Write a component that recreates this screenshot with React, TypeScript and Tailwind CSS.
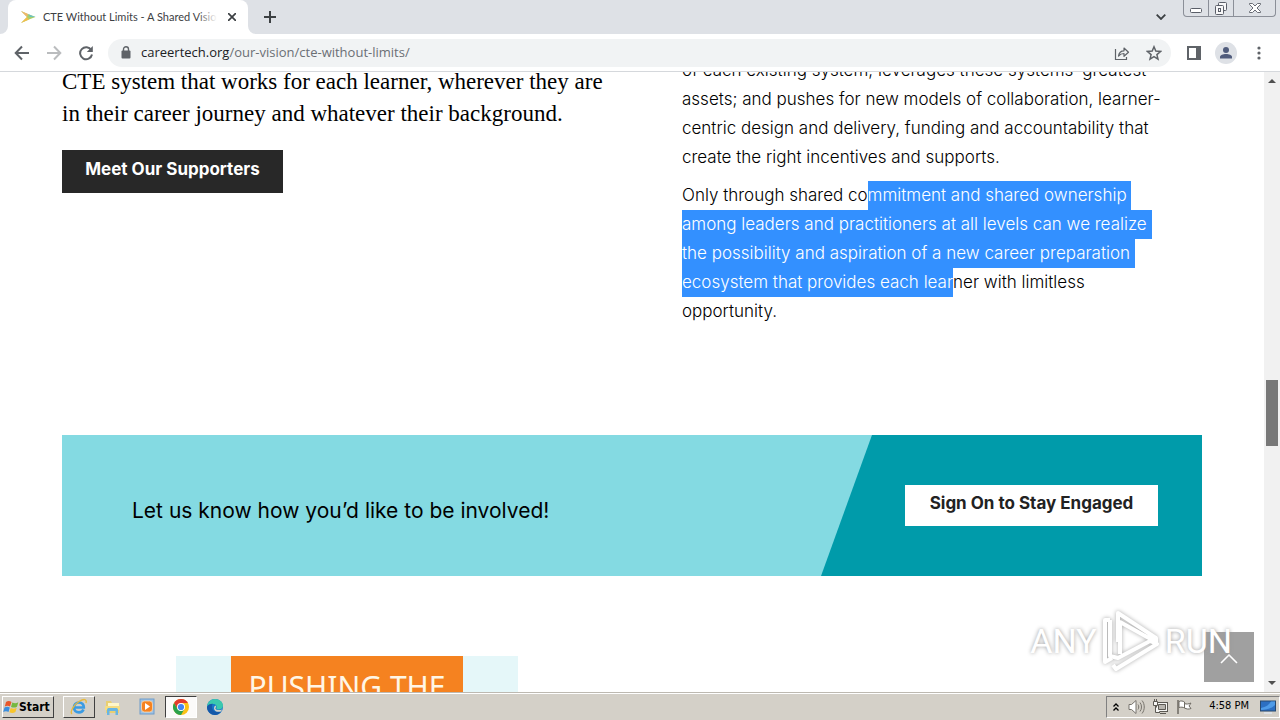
import React from "react";

type IconProps = { className?: string };

const Favicon = () => (
  <svg viewBox="0 0 16 16" className="h-4 w-4 shrink-0">
    <path d="M1 2l8 3.600L15.500 8 9 10.500 1 14l6-6z" fill="#a9cf6a" />
    <path d="M1 2l7 3-1 3z" fill="#f2b66a" />
    <path d="M1 14l6-6 2 2.500z" fill="#f3bd4a" />
    <path d="M8 5l7.500 3H10z" fill="#6fc3bb" />
    <path d="M1.500 4L6 8l-4.500 4z" fill="#fff" />
  </svg>
);

const Back = ({ className }: IconProps) => (
  <svg viewBox="0 0 16 16" className={className} fill="none" stroke="currentColor" strokeWidth="2">
    <path d="M15 8H2M8 1.500L1.700 8 8 14.500" />
  </svg>
);

const Reload = () => (
  <svg viewBox="0 0 16 16" className="h-4 w-4" fill="none" stroke="#5f6368" strokeWidth="2">
    <path d="M13.300 5.200A6 6 0 1 0 14 9.500" />
    <path d="M14.800 1v6h-6z" fill="#5f6368" stroke="none" />
  </svg>
);

const Lock = () => (
  <svg viewBox="0 0 10 13" className="h-[13px] w-[10px] shrink-0">
    <rect x="0.500" y="4.500" width="9" height="8" rx="1" fill="#5f6368" />
    <path d="M2.500 5V3.200a2.500 2.500 0 0 1 5 0V5" fill="none" stroke="#5f6368" strokeWidth="1.400" />
  </svg>
);

const Share = () => (
  <svg viewBox="0 0 16 16" className="h-4 w-4" fill="none" stroke="#5f6368" strokeWidth="1.200">
    <path d="M1.500 4v10.500h11V12" />
    <path d="M4.500 11c.5-3.500 2.500-5.200 5.500-5.200V3l4.500 4.200L10 11.300V8.500c-2.300 0-4 .7-5.500 2.500z" strokeLinejoin="round" />
  </svg>
);

const Star = () => (
  <svg viewBox="0 0 16 16" className="h-4 w-4" fill="none" stroke="#5f6368" strokeWidth="1.500">
    <path d="M8 1.800l1.800 4.300 4.700.4-3.600 3.100 1.100 4.500L8 11.700l-4 2.400 1.100-4.500L1.500 6.500l4.700-.4z" />
  </svg>
);

const SidePanel = () => (
  <svg viewBox="0 0 14 14" className="h-[14px] w-[14px]">
    <rect x="1" y="1" width="12" height="12" fill="none" stroke="#5f6368" strokeWidth="2" />
    <rect x="9" y="0" width="5" height="14" fill="#5f6368" />
  </svg>
);

const Avatar = () => (
  <svg viewBox="0 0 22 22" className="h-[22px] w-[22px]">
    <circle cx="11" cy="11" r="11" fill="#dee1e6" />
    <circle cx="11" cy="8" r="3" fill="#505c7c" />
    <path d="M5 16.500v-1.500c0-2 3-3 6-3s6 1 6 3v1.500z" fill="#505c7c" />
  </svg>
);

const Kebab = () => (
  <svg viewBox="0 0 4 14" className="h-[14px] w-1" fill="#5f6368">
    <circle cx="2" cy="2" r="1.600" />
    <circle cx="2" cy="7" r="1.600" />
    <circle cx="2" cy="12" r="1.600" />
  </svg>
);

function TabStrip() {
  return (
    <header className="flex h-[34px] shrink-0 items-end bg-[#dee1e6] pl-2">
      <div className="relative flex h-[34px] w-60 items-center rounded-t-lg bg-white pl-3">
        <svg viewBox="0 0 8 8" className="absolute -left-2 bottom-0 h-2 w-2"><path d="M8 0v8H0a8 8 0 0 0 8-8z" fill="#fff" /></svg>
        <svg viewBox="0 0 8 8" className="absolute -right-2 bottom-0 h-2 w-2"><path d="M0 0v8h8a8 8 0 0 1-8-8z" fill="#fff" /></svg>
        <Favicon />
        <span className="relative ml-[7px] w-[174px] overflow-hidden whitespace-nowrap font-['Lato',sans-serif] text-[11px] text-[#3c4043]">
          CTE Without Limits - A Shared Vision
          <span className="absolute inset-y-0 right-0 w-5 bg-linear-to-r from-transparent to-white" />
        </span>
        <button aria-label="Close tab" className="ml-[7px] flex h-4 w-4 items-center justify-center">
          <svg viewBox="0 0 8 8" className="h-2 w-2" stroke="#3c4043" strokeWidth="1.700"><path d="M0 0l8 8M8 0L0 8" /></svg>
        </button>
      </div>
      <button aria-label="New tab" className="ml-3 flex h-[34px] w-5 items-center justify-center">
        <svg viewBox="0 0 12 12" className="h-3 w-3" stroke="#3c4043" strokeWidth="2"><path d="M6 0v12M0 6h12" /></svg>
      </button>
      <div className="ml-auto flex h-[34px] items-start pr-1">
        <button aria-label="Search tabs" className="mr-[14px] flex h-[34px] w-4 items-center justify-center">
          <svg viewBox="0 0 10 6" className="h-[6px] w-[10px]" fill="none" stroke="#3c4043" strokeWidth="1.800"><path d="M.7.700L5 5 9.300.700" /></svg>
        </button>
        <div className="flex h-[17px] divide-x divide-[#8b8f98] rounded-b border border-t-0 border-[#8b8f98]">
          <button aria-label="Minimize" className="flex w-[25px] items-center justify-center">
            <svg viewBox="0 0 12 6" className="mt-1 h-[6px] w-3"><rect x=".5" y="1.500" width="11" height="4" rx="1" fill="#fff" stroke="#5a5e68" /></svg>
          </button>
          <button aria-label="Restore" className="flex w-[25px] items-center justify-center">
            <svg viewBox="0 0 14 13" className="h-[13px] w-[14px]" fill="#f7f7f8" stroke="#5a5e68">
              <rect x="4.500" y=".5" width="8" height="8" rx="1" />
              <rect x="1.500" y="3.500" width="8" height="9" rx="1" />
              <rect x="4.500" y="6.500" width="2" height="3" />
            </svg>
          </button>
          <button aria-label="Close" className="flex w-[41px] items-center justify-center">
            <svg viewBox="0 0 12 10" className="h-[10px] w-3"><path d="M.5.500h3L6 3 8.500.500h3v1L8 5l3.500 3.500v1h-3L6 7 3.500 9.500h-3v-1L4 5 .5 1.500z" fill="#fff" stroke="#5a5e68" strokeWidth=".9" /></svg>
          </button>
        </div>
      </div>
    </header>
  );
}

function Toolbar() {
  return (
    <nav className="flex h-[38px] shrink-0 items-center border-b border-[#d5d8dc] bg-white px-[14px]">
      <button aria-label="Back" className="mr-4"><Back className="h-4 w-4 text-[#5f6368]" /></button>
      <button aria-label="Forward" className="mr-4"><Back className="h-4 w-4 rotate-180 text-[#babcbe]" /></button>
      <button aria-label="Reload" className="mr-[14px]"><Reload /></button>
      <div className="flex h-7 min-w-0 flex-1 items-center rounded-full bg-[#f1f3f4] pr-[9px] pl-[13px]">
        <Lock />
        <a href="#address" className="ml-[10px] flex-1 font-['Open_Sans',sans-serif] text-[13px] whitespace-nowrap text-[#6b6f74]">
          <span className="text-[#202124]">careertech.org</span>/our-vision/cte-without-limits/
        </a>
        <button aria-label="Share" className="mr-4"><Share /></button>
        <button aria-label="Bookmark"><Star /></button>
      </div>
      <button aria-label="Side panel" className="ml-4"><SidePanel /></button>
      <button aria-label="Profile" className="ml-[14px]"><Avatar /></button>
      <button aria-label="Menu" className="mr-[5px] ml-5"><Kebab /></button>
    </nav>
  );
}

const Selected = ({ children }: { children: React.ReactNode }) => (
  <span className="inline-block bg-[#3390ff] whitespace-pre text-white">{children}</span>
);

function Article() {
  return (
    <section className="-mt-4 grid grid-cols-[31fr_26fr] text-black">
      <div className="pt-[10px]">
        <p className="font-['Liberation_Serif',serif] text-[23px] leading-8 whitespace-nowrap">
          CTE system that works for each learner, wherever they are<br />
          in their career journey and whatever their background.
        </p>
        <a href="#supporters" className="mt-5 inline-flex h-[43px] w-[221px] items-center justify-center bg-[#282828] pb-1 font-['Inter',sans-serif] text-[17px] font-bold text-white">
          Meet Our Supporters
        </a>
      </div>
      <div className="font-['Inter',sans-serif] text-[17px] leading-[29px] font-light whitespace-nowrap">
        <p>
          of each existing system; leverages these systems’ greatest<br />
          assets; and pushes for new models of collaboration, learner-<br />
          centric design and delivery, funding and accountability that<br />
          create the right incentives and supports.
        </p>
        <p className="mt-[9px]">
          Only through shared co<Selected>mmitment and shared ownership </Selected><br />
          <Selected>among leaders and practitioners at all levels can we realize </Selected><br />
          <Selected>the possibility and aspiration of a new career preparation </Selected><br />
          <Selected>ecosystem that provides each lear</Selected>ner with limitless<br />
          opportunity.
        </p>
      </div>
    </section>
  );
}

function Banner() {
  return (
    <section className="mt-[109px] flex h-[141px] bg-[#84dae2]">
      <p className="flex flex-1 items-center pt-[10px] pl-[70px] font-['Inter',sans-serif] text-[21px] text-black">
        Let us know how you’d like to be involved!
      </p>
      <div className="flex w-[381px] items-center justify-end bg-[#009baa] pr-11 [clip-path:polygon(51px_0,100%_0,100%_100%,0_100%)]">
        <a href="#sign-on" className="flex h-[41px] w-[253px] items-center justify-center bg-white pb-1 font-['Inter',sans-serif] text-[17px] font-bold text-[#222]">
          Sign On to Stay Engaged
        </a>
      </div>
    </section>
  );
}

function Watermark() {
  return (
    <div className="pointer-events-none absolute right-12 bottom-4 flex h-[70px] items-center gap-1 font-['Roboto',sans-serif] text-[34px] text-white [text-shadow:0_0_4px_#999999]">
      <span>ANY</span>
      <svg viewBox="0 0 60 66" className="h-[66px] w-[60px] drop-shadow-[0_0_2px_#aaaaaa]" fill="none" stroke="#fff" strokeWidth="4" strokeLinejoin="round">
        <path d="M17 34V5l38 25v4L19 14v32" />
        <path d="M9 12H4v42l7-4" />
        <path d="M9 12v36l8 2 32-17 7 3-41 25-3-4" />
      </svg>
      <span>RUN</span>
    </div>
  );
}

function Scrollbar() {
  return (
    <aside aria-label="Scrollbar" className="flex w-4 shrink-0 flex-col items-center bg-[#f1f1f1] py-[7px]">
      <svg viewBox="0 0 8 4" className="h-1 w-2"><path d="M0 4l4-4 4 4z" fill="#505050" /></svg>
      <div className="flex-[297]" />
      <div className="h-[66px] w-3 bg-[#787878]" />
      <div className="flex-[235]" />
      <svg viewBox="0 0 8 4" className="h-1 w-2"><path d="M0 0l4 4 4-4z" fill="#505050" /></svg>
    </aside>
  );
}

const WindowsFlag = () => (
  <svg viewBox="0 0 16 16" className="h-4 w-4">
    <path d="M3 3c2-1.500 4-1 5.500 0L7 7.500C5.500 6.500 3.500 6.500 1.800 7.500z" fill="#e8572a" />
    <path d="M9.300 3.400c2 1 4 1 6-.2L14 7.700c-2 1.200-4 1-6 .2z" fill="#76b83f" />
    <path d="M1.500 8.400c2-1 4-.8 5.300.2L5.500 13C4 12 2 12 .2 13z" fill="#3b8ede" />
    <path d="M7.700 8.900c2 1 4 1 6-.2L12.400 13c-2 1.400-4 1.200-6 .3z" fill="#f8c52c" />
  </svg>
);

const Explorer = () => (
  <svg viewBox="0 0 18 18" className="h-[18px] w-[18px]">
    <path d="M4.300 9.500h9.500c.1-3-1.800-5-4.800-5s-5 2.200-5 5 2 4.900 5 4.900c2.200 0 3.800-1 4.500-2.800" fill="none" stroke="#3a9be3" strokeWidth="2.700" />
    <path d="M2 16C-.5 14 4 6.500 9 3.500s8-2.500 7 1.500" fill="none" stroke="#e7b93d" strokeWidth="1.400" />
  </svg>
);

const Folder = () => (
  <svg viewBox="0 0 18 18" className="h-[18px] w-[18px]">
    <path d="M2 3h5l1 2h7v10H2z" fill="#e9cf72" />
    <path d="M4 5h11v4H4z" fill="#fff6c9" />
    <path d="M1 8h15v4H1z" fill="#f5dd83" />
    <path d="M3 17v-5c0-1.500 1-2 2-2h7c1 0 2 .5 2 2v5h-2.500v-4h-6v4z" fill="#68b5e3" />
  </svg>
);

const MediaPlayer = () => (
  <svg viewBox="0 0 18 18" className="h-[18px] w-[18px]">
    <rect x="2" y="1" width="14" height="15" fill="#9fc3e4" stroke="#6f9bc9" />
    <rect x="3.500" y="3" width="11" height="11" rx="3" fill="#f58220" stroke="#fbd9b0" strokeWidth=".8" />
    <path d="M7 5v7l5-3.500z" fill="#fff" />
  </svg>
);

const Chrome = () => (
  <svg viewBox="0 0 16 16" className="h-4 w-4">
    <circle cx="8" cy="8" r="8" fill="#fbc116" />
    <path d="M1.070 4A8 8 0 0 1 14.930 4H8L4.540 10z" fill="#e33b2e" />
    <path d="M1.070 4A8 8 0 0 0 8 16L11.460 10H4.540z" fill="#2ba24c" />
    <circle cx="8" cy="8" r="4" fill="#fff" />
    <circle cx="8" cy="8" r="3.100" fill="#4285f4" />
  </svg>
);

const Edge = () => (
  <svg viewBox="0 0 16 16" className="h-4 w-4">
    <circle cx="8" cy="8" r="8" fill="#1677c9" />
    <path d="M0 7.500C.5 3 4 0 8 0c4.500 0 8 3 8 6.500 0 2.500-2 4-4.300 4-2.200 0-2.500-1-2.200-1.600C10 7 9 5 6 5 3 5 .8 6 0 7.500z" fill="#3ac8ae" />
    <path d="M0 8C1 5.500 3.500 4.600 6 4.800 4.500 6 4.500 9 6 11c1.800 2.200 5 2.500 8 1.200C12 15.500 9 16.500 6.500 15.800 2.500 15 0 12 0 8z" fill="#1558a8" />
    <path d="M8.500 6.500c1 1 .5 2-.2 2.700.6 2 3.700 2.500 6.700 1.200l-1 2c-3.500 1.200-7-.5-7-3 0-1.500.6-2.400 1.500-2.900z" fill="#d4d0c8" />
  </svg>
);

function Taskbar() {
  return (
    <footer className="flex h-7 shrink-0 items-center border-t border-[#bdb9b1] bg-[#d4d0c8] pl-[2px] shadow-[inset_0_1px_0_#ffffff]">
      <button className="flex h-[22px] w-[52px] items-center border border-t-white border-r-[#404040] border-b-[#404040] border-l-white text-xs font-bold text-black">
        <WindowsFlag />Start
      </button>
      <button aria-label="Internet Explorer" className="ml-[9px] flex h-[22px] w-8 items-center justify-center border border-t-white border-r-[#404040] border-b-[#404040] border-l-white"><Explorer /></button>
      <button aria-label="File Explorer" className="ml-[9px]"><Folder /></button>
      <button aria-label="Media Player" className="ml-4"><MediaPlayer /></button>
      <button aria-label="Chrome" className="ml-[9px] flex h-[22px] w-8 items-center justify-center border border-t-[#404040] border-r-white border-b-white border-l-[#404040] bg-[#fbfaf9]"><Chrome /></button>
      <button aria-label="Edge" className="ml-[10px]"><Edge /></button>
      <div className="ml-auto flex h-[22px] items-center border border-t-[#808080] border-r-white border-b-white border-l-[#808080] pr-[3px] pl-[6px]">
        <svg viewBox="0 0 6 8" className="h-2 w-[6px]" fill="none" stroke="#000" strokeWidth="1.300"><path d="M.5 3.500L3 1l2.500 2.500M.5 7.500L3 5l2.500 2.500" /></svg>
        <svg viewBox="0 0 17 16" className="ml-[9px] h-4 w-[17px]" fill="none" stroke="#77736c">
          <path d="M1 5.500h2.500L8 1.500v13l-4.500-4H1z" fill="#fff" />
          <path d="M10 5.500c1 1.500 1 3.500 0 5M12 3.500c2 2.500 2 6.500 0 9M14 1.500c3 3.500 3 9.500 0 13" />
        </svg>
        <svg viewBox="0 0 17 16" className="ml-[7px] h-4 w-[17px]" fill="#f5f5f3" stroke="#5c5953">
          <rect x="4.500" y="3.500" width="11" height="9" />
          <path d="M6.500 5.500h7v5h-7z" fill="#b8b5af" />
          <path d="M8 14.500h6M3.500 7v6.500H8M1.500 2.500h4v4h-4zM2.500 0v2.500M4.500 0v2.500" />
        </svg>
        <svg viewBox="0 0 17 16" className="ml-[7px] h-4 w-[17px]" fill="#fff" stroke="#6d6962">
          <path d="M2 1v14" strokeWidth="1.500" />
          <path d="M3 2.500c2-1 4-.5 5.500.5v6C7 8 5 8 3 8.500z" />
          <path d="M8.500 4.500c2 1 4 .5 6.500-.5l-2 3 2 2.500c-2.500 1-4.500.5-6.500-.5z" />
        </svg>
        <time className="ml-4 text-[11px] whitespace-nowrap text-black">4:58 PM</time>
        <svg viewBox="0 0 16 14" className="ml-[11px] h-[14px] w-4">
          <rect x=".5" y="1" width="15" height="10" fill="#2c6fc2" stroke="#27496f" />
          <path d="M1 8c5-1 8-3 10-6.500h4V5c-4 4-9 5-14 5z" fill="#4e9be8" />
          <path d="M4 13h8" stroke="#dfe6ee" strokeWidth="1.500" />
        </svg>
      </div>
    </footer>
  );
}

export default function App() {
  return (
    <div className="flex h-screen flex-col overflow-hidden bg-white font-['DejaVu_Sans_Condensed','DejaVu_Sans',sans-serif]">
      <TabStrip />
      <Toolbar />
      <div className="relative flex min-h-0 flex-1">
        <main className="min-w-0 flex-1 overflow-hidden px-[62px]">
          <Article />
          <Banner />
          <section className="mt-20 ml-[114px] flex h-[200px] w-[342px] justify-center bg-[#e5f7f9]">
            <h2 className="w-[232px] bg-[#f58220] pt-2 text-center font-['Noto_Sans',sans-serif] text-[30px] whitespace-nowrap text-[#fff6e6]">
              PUSHING THE
            </h2>
          </section>
        </main>
        <Scrollbar />
        <button aria-label="Back to top" className="absolute right-[26px] bottom-[10px] flex h-[50px] w-[50px] items-center justify-center bg-[#a0a0a0]">
          <svg viewBox="0 0 18 10" className="mt-1 h-[10px] w-[18px]" fill="none" stroke="#fff" strokeWidth="1.600"><path d="M1 9l8-8 8 8" /></svg>
        </button>
        <Watermark />
      </div>
      <Taskbar />
    </div>
  );
}
